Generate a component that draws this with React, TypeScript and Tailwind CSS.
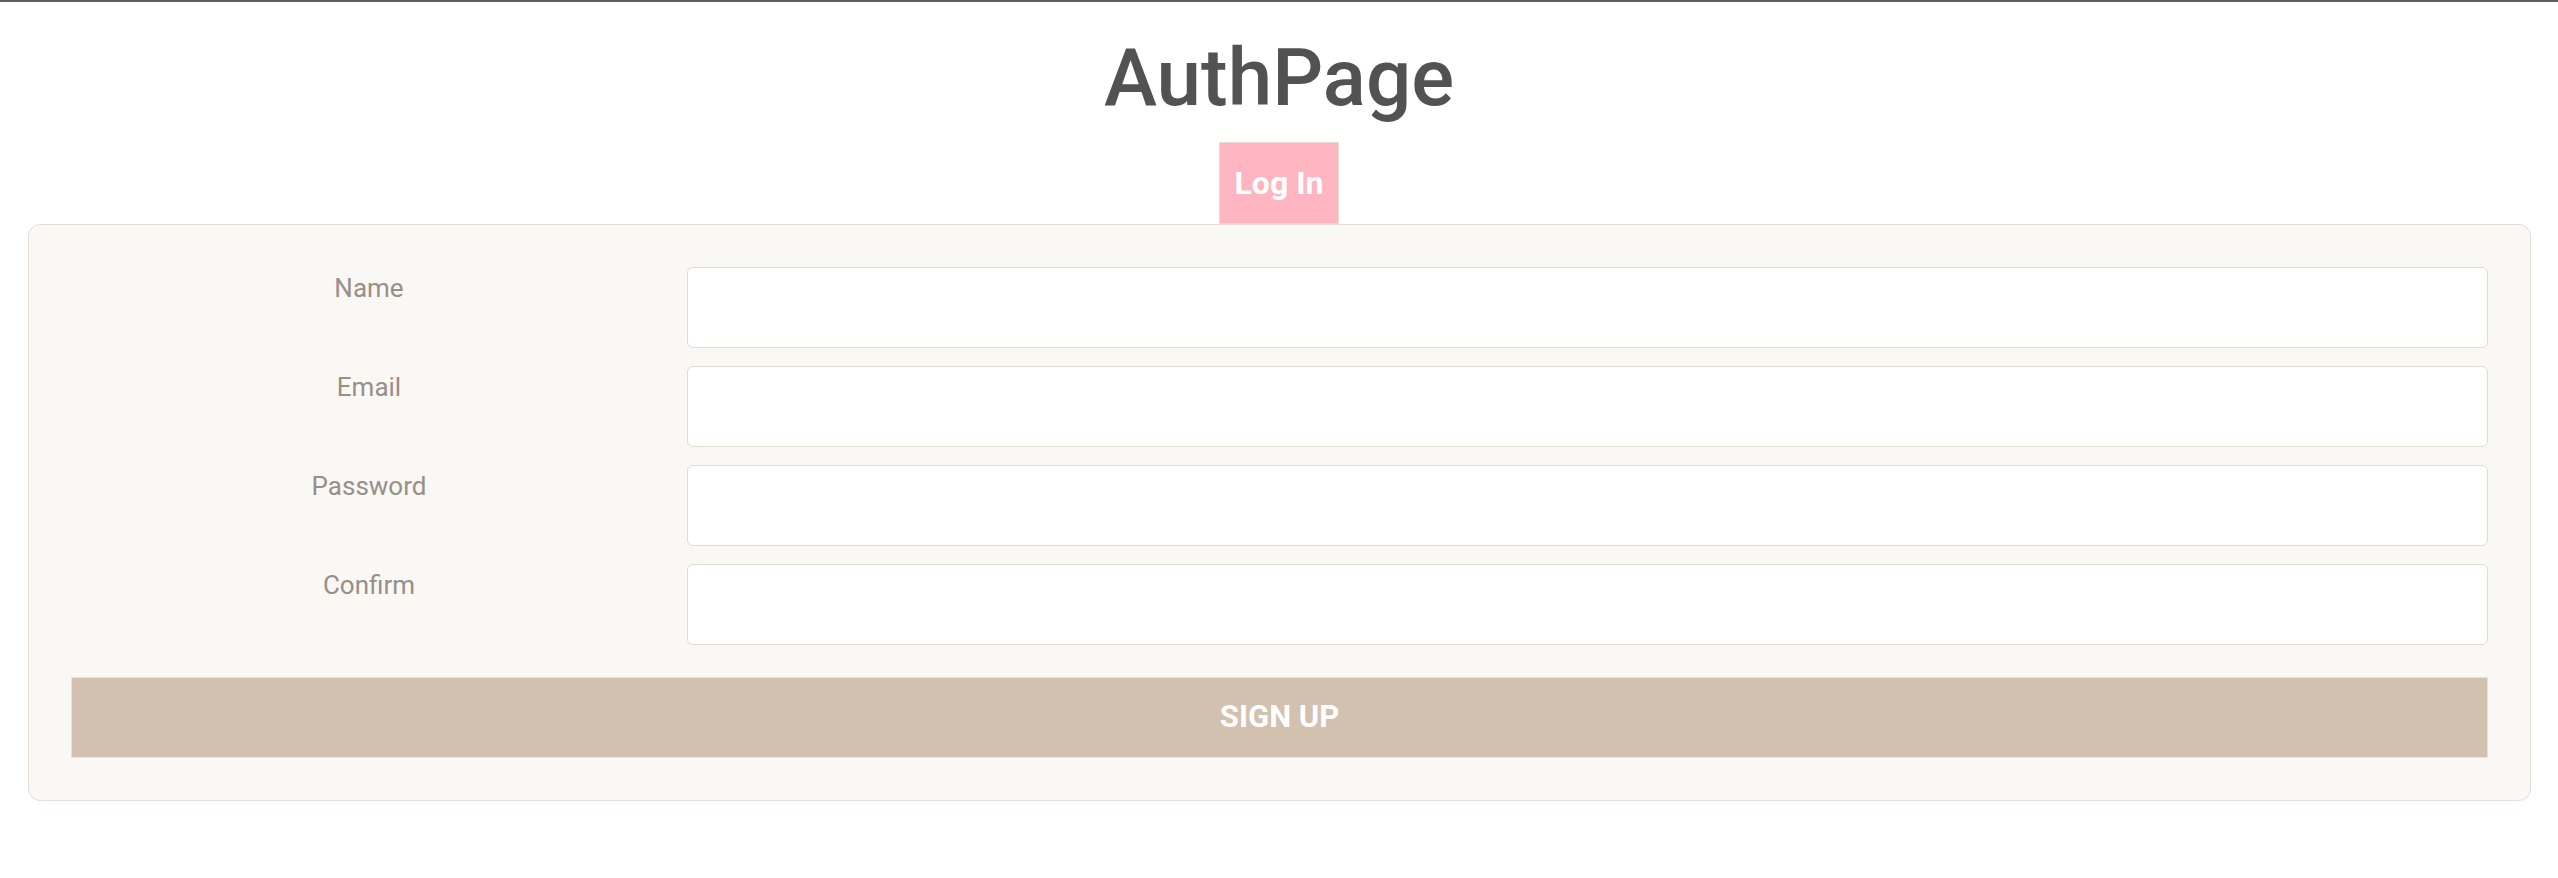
const font = { fontFamily: "Roboto, 'Noto Sans', sans-serif" };

const fields = ["Name", "Email", "Password", "Confirm"];

export default function App() {
  return (
    <div className="min-h-screen bg-white" style={font}>
      <div className="h-[2px] bg-[#5f5f62]" />
      <h1 className="mt-[29px] text-center text-[80px] font-medium leading-[94px] text-[#525252]">AuthPage</h1>

      <div className="mt-[17px] flex justify-center">
        <button className="h-[82px] w-[120px] border border-[#e2dcd6] bg-[#ffb6c1] text-[32px] font-bold text-white">
          Log In
        </button>
      </div>

      <div className="ml-[28px] mr-[27px] rounded-[12px] border border-[#e6ddd5] bg-[#f9f8f5] p-[42px]">
        <div className="flex flex-col gap-[18px]">
          {fields.map((f) => (
            <div key={f} className="flex items-start gap-[20px]">
              <label className="w-[596px] shrink-0 pt-[2px] text-center text-[26px] leading-[39px] text-[#9a8e86]">{f}</label>
              <input
                type={f === "Password" || f === "Confirm" ? "password" : f === "Email" ? "email" : "text"}
                className="h-[81px] flex-1 rounded-[6px] border border-[#e3dad2] bg-white px-4 text-[26px] outline-none"
              />
            </div>
          ))}
        </div>
        <button className="mt-[32px] flex h-[81px] w-full items-center justify-center border border-[#e9e2dc] bg-[#d3c1b0] text-[31px] font-bold text-white">
          SIGN UP
        </button>
      </div>
    </div>
  );
}
